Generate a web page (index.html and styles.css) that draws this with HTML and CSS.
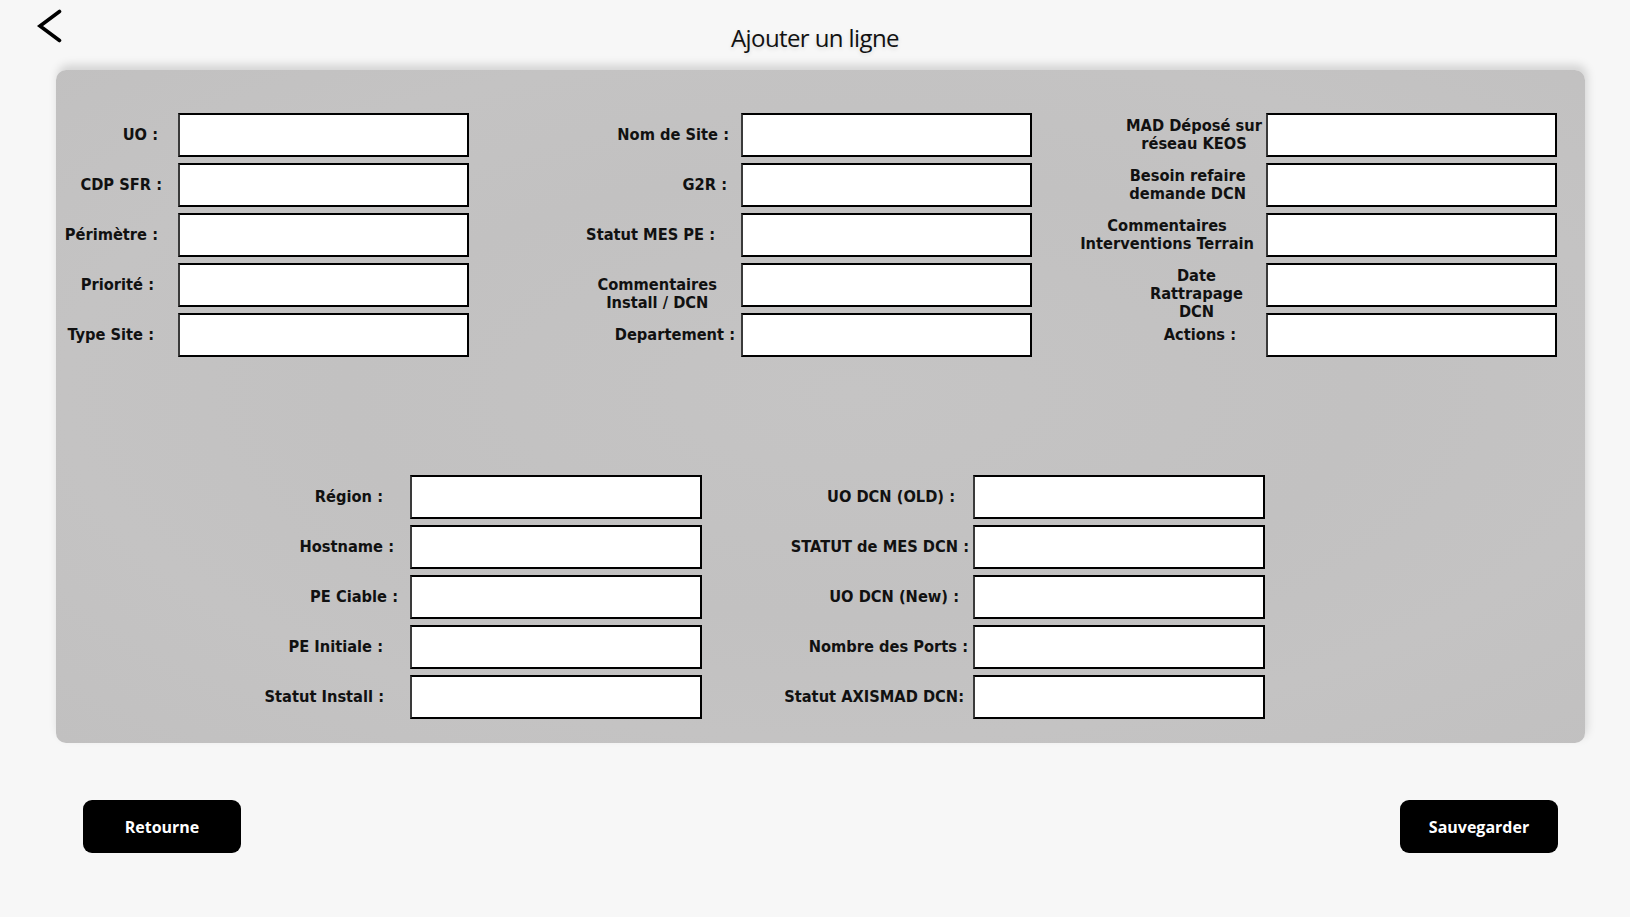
FILE: index.html
```html
<!DOCTYPE html>
<html lang="fr">
<head>
<meta charset="utf-8">
<title>Ajouter un ligne</title>
<link rel="stylesheet" href="styles.css">
</head>
<body>
<header class="topbar">
  <button class="back" type="button" aria-label="Retour">
    <svg width="26" height="34" viewBox="0 0 26 34"><polyline points="23.5,2.5 4,17 23.5,31.5" fill="none" stroke="#000" stroke-width="3.6" stroke-linecap="round" stroke-linejoin="miter"/></svg>
  </button>
  <h1 class="title">Ajouter un ligne</h1>
  <div class="spacer"></div>
</header>

<main class="panel">
  <section class="top">
    <div class="group g1">
      <div class="row"><label class="lbl pr20">UO :</label><input class="field" type="text"></div>
      <div class="row"><label class="lbl pr16">CDP SFR :</label><input class="field" type="text"></div>
      <div class="row"><label class="lbl pr20">Périmètre :</label><input class="field" type="text"></div>
      <div class="row"><label class="lbl pr24">Priorité :</label><input class="field" type="text"></div>
      <div class="row"><label class="lbl pr24">Type Site :</label><input class="field" type="text"></div>
    </div>
    <div class="group g2">
      <div class="row"><label class="lbl pr12">Nom de Site :</label><input class="field" type="text"></div>
      <div class="row"><label class="lbl pr14">G2R :</label><input class="field" type="text"></div>
      <div class="row"><label class="lbl pr26">Statut MES PE :</label><input class="field" type="text"></div>
      <div class="row"><label class="lbl pr24 low"><span class="ml">Commentaires<br>Install / DCN</span></label><input class="field" type="text"></div>
      <div class="row"><label class="lbl pr6">Departement :</label><input class="field" type="text"></div>
    </div>
    <div class="group g3">
      <div class="row"><label class="lbl pr4"><span class="ml">MAD Déposé sur<br>réseau KEOS</span></label><input class="field" type="text"></div>
      <div class="row"><label class="lbl pr20"><span class="ml">Besoin refaire<br>demande DCN</span></label><input class="field" type="text"></div>
      <div class="row"><label class="lbl pr12"><span class="ml">Commentaires<br>Interventions Terrain</span></label><input class="field" type="text"></div>
      <div class="row"><label class="lbl pr23 low"><span class="ml">Date<br>Rattrapage<br>DCN</span></label><input class="field" type="text"></div>
      <div class="row"><label class="lbl pr30">Actions :</label><input class="field" type="text"></div>
    </div>
  </section>

  <section class="bottom">
    <div class="group ga">
      <div class="row"><label class="lbl pr27">Région :</label><input class="field" type="text"></div>
      <div class="row"><label class="lbl pr16">Hostname :</label><input class="field" type="text"></div>
      <div class="row"><label class="lbl pr12">PE Ciable :</label><input class="field" type="text"></div>
      <div class="row"><label class="lbl pr27">PE Initiale :</label><input class="field" type="text"></div>
      <div class="row"><label class="lbl pr26">Statut Install :</label><input class="field" type="text"></div>
    </div>
    <div class="group gb">
      <div class="row"><label class="lbl pr18">UO DCN (OLD) :</label><input class="field" type="text"></div>
      <div class="row"><label class="lbl pr4">STATUT de MES DCN :</label><input class="field" type="text"></div>
      <div class="row"><label class="lbl pr14">UO DCN (New) :</label><input class="field" type="text"></div>
      <div class="row"><label class="lbl pr5">Nombre des Ports :</label><input class="field" type="text"></div>
      <div class="row"><label class="lbl pr9">Statut AXISMAD DCN:</label><input class="field" type="text"></div>
    </div>
  </section>
</main>

<footer class="actions">
  <button class="btn" type="button">Retourne</button>
  <button class="btn" type="button">Sauvegarder</button>
</footer>
</body>
</html>
```

FILE: styles.css
```css
html, body {
  margin: 0;
  padding: 0;
}

body {
  background: #f7f7f7;
  color: #000;
  font-family: "Open Sans", "Noto Sans", sans-serif;
  width: 1630px;
  height: 917px;
  overflow: hidden;
}

.topbar {
  height: 70px;
  display: grid;
  grid-template-columns: 1fr auto 1fr;
  align-items: start;
}

.back {
  justify-self: start;
  margin: 9px 0 0 36px;
  padding: 0;
  border: 0;
  background: none;
  width: 26px;
  height: 34px;
  display: block;
}

.back svg {
  display: block;
}

.title {
  margin: 22px 0 0;
  font-family: "Open Sans", "Noto Sans", sans-serif;
  font-weight: 400;
  font-size: 24px;
  line-height: 32px;
  letter-spacing: -0.6px;
  color: #111;
  text-shadow: 0 2px 4px rgba(0, 0, 0, 0.12);
}

.panel {
  margin: 0 45px 0 56px;
  height: 673px;
  box-sizing: border-box;
  padding: 43px 28px 0 8px;
  background: radial-gradient(ellipse at 52% 48%, #c5c4c4 0%, #c2c1c1 45%, #c4c3c3 70%, #c1c0c0 100%);
  border-radius: 10px;
  box-shadow: 2px -5px 10px rgba(0, 0, 0, 0.15);
}

.top {
  display: flex;
}

.group {
  display: flex;
  flex-direction: column;
  gap: 6px;
}

.row {
  display: flex;
  align-items: center;
  height: 44px;
}

.lbl {
  flex: 1;
  display: flex;
  justify-content: flex-end;
  box-sizing: border-box;
  white-space: nowrap;
  font-family: "DejaVu Sans Condensed", "DejaVu Sans", sans-serif;
  font-stretch: condensed;
  font-weight: 700;
  font-size: 16.3px;
  line-height: 18px;
  color: #111;
}

.ml {
  text-align: center;
}

.lbl.low {
  margin-top: 18px;
}

.field {
  width: 291px;
  height: 44px;
  box-sizing: border-box;
  flex: none;
  margin: 0;
  padding: 0 6px;
  background: #fff;
  border: 2px solid #000;
  border-left-color: #3a3a3a;
  border-radius: 0;
  font-size: 16px;
  outline: none;
  appearance: none;
}

.g1 { width: 405px; }
.g2 { width: 472px; margin-left: 91px; }
.g3 { width: 482px; margin-left: 43px; }

.bottom {
  display: flex;
  margin: 118px 0 0 186px;
}

.ga { width: 452px; }
.gb { width: 485px; margin-left: 78px; }

.ga .field, .gb .field { width: 292px; }

.pr4 { padding-right: 4px; }
.pr5 { padding-right: 5px; }
.pr6 { padding-right: 6px; }
.pr9 { padding-right: 9px; }
.pr12 { padding-right: 12px; }
.pr14 { padding-right: 14px; }
.pr16 { padding-right: 16px; }
.pr18 { padding-right: 18px; }
.pr20 { padding-right: 20px; }
.pr23 { padding-right: 23px; }
.pr24 { padding-right: 24px; }
.pr26 { padding-right: 26px; }
.pr27 { padding-right: 27px; }
.pr30 { padding-right: 30px; }

.actions {
  display: flex;
  justify-content: space-between;
  padding: 0 72px 0 83px;
  margin-top: 57px;
}

.btn {
  width: 158px;
  height: 53px;
  border: 0;
  border-radius: 9px;
  background: #000;
  color: #fff;
  font-family: "Open Sans", "Noto Sans", sans-serif;
  font-weight: 700;
  font-size: 16px;
  padding: 0;
}
```
